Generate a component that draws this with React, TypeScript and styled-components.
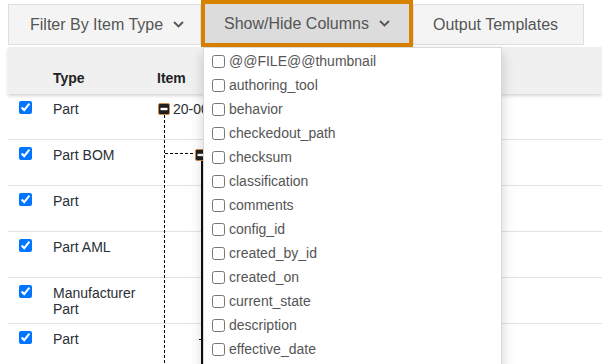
import React from 'react';
import styled, { createGlobalStyle } from 'styled-components';

const Global = createGlobalStyle`
  html, body { margin: 0; padding: 0; overflow: hidden; background: #fff; }
  body { font-family: "Liberation Sans", Arial, sans-serif; }
`;

const Page = styled.div`
  width: 602px;
  height: 364px;
  overflow: hidden;
  position: relative;
`;

const Toolbar = styled.div`
  display: flex;
  align-items: flex-start;
  padding-left: 8px;
  height: 47px;
  position: relative;
  z-index: 3;
`;

const ToolButton = styled.button<{ $active?: boolean; $w: number; $pl: number }>`
  box-sizing: border-box;
  width: ${(p) => p.$w}px;
  height: ${(p) => (p.$active ? 47 : 41)}px;
  margin: ${(p) => (p.$active ? 0 : 4)}px 0 0 0;
  display: flex;
  align-items: center;
  gap: 10px;
  padding: 0 0 0 ${(p) => p.$pl}px;
  background: ${(p) => (p.$active ? '#dcdcdc' : '#f4f4f4')};
  border: ${(p) => (p.$active ? '4px solid #d98200' : '1px solid #dedede')};
  font: 16px "Liberation Sans", Arial, sans-serif;
  color: #555;
  white-space: nowrap;
  cursor: pointer;
`;

const MenuAnchor = styled.div`
  position: relative;
`;

const Dropdown = styled.div`
  position: absolute;
  top: 47px;
  left: 2px;
  width: 299px;
  height: 330px;
  box-sizing: border-box;
  background: #fff;
  border: 1px solid rgba(0, 0, 0, 0.15);
  box-shadow: 0 6px 12px rgba(0, 0, 0, 0.18);
  padding-top: 1px;
`;

const MenuItem = styled.label`
  display: flex;
  align-items: center;
  height: 24px;
  padding-left: 4px;
  font-size: 14px;
  color: #555;
  white-space: nowrap;
`;

const Check = styled.input`
  width: 13px;
  height: 13px;
  margin: 3px 4px 3px 4px;
  flex: none;
`;

const TableHead = styled.div`
  position: relative;
  z-index: 2;
  margin-left: 8px;
  height: 47px;
  box-sizing: border-box;
  padding-bottom: 8px;
  background: #f0f0f0;
  box-shadow: 0 2px 3px rgba(0, 0, 0, 0.16);
  display: grid;
  grid-template-columns: 45px 104px 1fr;
  align-items: end;
  font-size: 14px;
  line-height: 16px;
  font-weight: bold;
  color: #222;
`;

const HeadCell = styled.div<{ $col: number }>`
  grid-column: ${(p) => p.$col};
`;

const Body = styled.div`
  position: relative;
  margin-left: 8px;
`;

const Row = styled.div`
  display: grid;
  grid-template-columns: 45px 104px 1fr;
  height: 46px;
  box-sizing: border-box;
  border-bottom: 1px solid #e2e2e2;
`;

const CheckCell = styled.div`
  padding: 4px 0 0 7px;
  & > input {
    margin: 3px 3px 3px 4px;
  }
`;

const TypeCell = styled.div`
  padding: 7px 10px 0 0;
  font-size: 14px;
  line-height: 16px;
  color: #2a2f36;
`;

const ItemCell = styled.div<{ $indent: number }>`
  padding: 7px 0 0 ${(p) => p.$indent}px;
  display: flex;
  align-items: center;
  gap: 3px;
  height: 16px;
  font-size: 14px;
  line-height: 16px;
  color: #2a2f36;
  white-space: nowrap;
`;

const TreeLines = styled.svg`
  position: absolute;
  left: 0;
  top: 0;
  pointer-events: none;
`;

const Chevron = () => (
  <svg width="11" height="7" viewBox="0 0 11 7">
    <path d="M1 1 L5.5 5.5 L10 1" stroke="#555" strokeWidth="1.8" fill="none" />
  </svg>
);

const NodeIcon = () => (
  <svg width="12" height="12" viewBox="0 0 12 12" style={{ flex: 'none' }}>
    <rect x="0.5" y="0.5" width="11" height="11" rx="1.5" fill="#1f1f1f" stroke="#c98a4a" />
    <rect x="2.5" y="4.8" width="7" height="2.4" fill="#fff" />
  </svg>
);

const columns = [
  '@@FILE@@thumbnail',
  'authoring_tool',
  'behavior',
  'checkedout_path',
  'checksum',
  'classification',
  'comments',
  'config_id',
  'created_by_id',
  'created_on',
  'current_state',
  'description',
  'effective_date',
  'effectivity_criteria',
];

const rows: { type: string; node?: { indent: number; label?: string } }[] = [
  { type: 'Part', node: { indent: 1, label: '20-000123' } },
  { type: 'Part BOM', node: { indent: 38 } },
  { type: 'Part' },
  { type: 'Part AML' },
  { type: 'Manufacturer Part' },
  { type: 'Part' },
];

export default function App() {
  return (
    <Page>
      <Global />
      <Toolbar>
        <ToolButton $w={193} $pl={21}>
          Filter By Item Type <Chevron />
        </ToolButton>
        <MenuAnchor>
          <ToolButton $active $w={212} $pl={19}>
            Show/Hide Columns <Chevron />
          </ToolButton>
          <Dropdown>
            {columns.map((c) => (
              <MenuItem key={c}>
                <Check type="checkbox" readOnly />
                {c}
              </MenuItem>
            ))}
          </Dropdown>
        </MenuAnchor>
        <ToolButton $w={171} $pl={19}>
          Output Templates
        </ToolButton>
      </Toolbar>
      <TableHead>
        <HeadCell $col={2}>Type</HeadCell>
        <HeadCell $col={3}>Item</HeadCell>
      </TableHead>
      <Body>
        {rows.map((r, i) => (
          <Row key={i}>
            <CheckCell>
              <input type="checkbox" checked readOnly />
            </CheckCell>
            <TypeCell>{r.type}</TypeCell>
            {r.node ? (
              <ItemCell $indent={r.node.indent}>
                <NodeIcon />
                {r.node.label}
              </ItemCell>
            ) : (
              <div />
            )}
          </Row>
        ))}
        <TreeLines width="594" height="276" viewBox="0 0 594 276" shapeRendering="crispEdges">
          <g stroke="#000" strokeWidth="1" strokeDasharray="3 2" fill="none">
            <path d="M156.5 21 V276" />
            <path d="M156.5 59.5 H187" />
          </g>
          <g stroke="#111" strokeWidth="1.5" fill="none">
            <path d="M193.8 67 V276" />
            <path d="M191 245.5 H196" />
          </g>
        </TreeLines>
      </Body>
    </Page>
  );
}
